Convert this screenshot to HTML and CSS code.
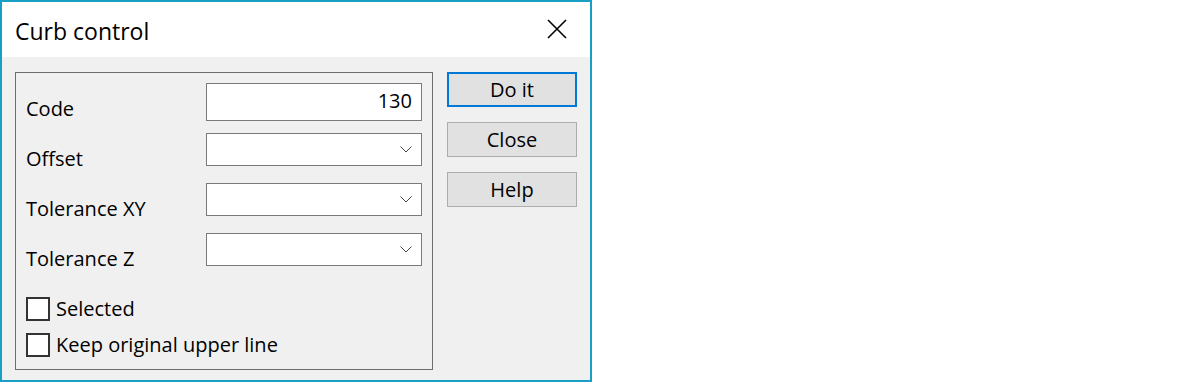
FILE: index.html
```html
<!DOCTYPE html>
<html lang="en">
<head>
    <meta charset="UTF-8">
    <meta name="viewport" content="width=device-width, initial-scale=1.0">
    <title>Curb control</title>
    <link rel="stylesheet" href="styles.css">
</head>
<body>
    <div class="window">
        <div class="titlebar">
            <span class="title">Curb control</span>
            <button class="close-x" title="Close">
                <svg width="20" height="20" viewBox="0 0 20 20">
                    <path d="M1 1 L19 19 M19 1 L1 19" stroke="#000" stroke-width="1.6" fill="none"/>
                </svg>
            </button>
        </div>

        <div class="content">
            <div class="group">
                <div class="row">
                    <label class="label">Code</label>
                    <div class="field edit">130</div>
                </div>
                <div class="row">
                    <label class="label">Offset</label>
                    <div class="field combo">
                        <svg width="12" height="7" viewBox="0 0 12 7">
                            <path d="M0.5 0.5 L6 6 L11.5 0.5" stroke="#444" stroke-width="1" fill="none"/>
                        </svg>
                    </div>
                </div>
                <div class="row">
                    <label class="label">Tolerance XY</label>
                    <div class="field combo">
                        <svg width="12" height="7" viewBox="0 0 12 7">
                            <path d="M0.5 0.5 L6 6 L11.5 0.5" stroke="#444" stroke-width="1" fill="none"/>
                        </svg>
                    </div>
                </div>
                <div class="row">
                    <label class="label">Tolerance Z</label>
                    <div class="field combo">
                        <svg width="12" height="7" viewBox="0 0 12 7">
                            <path d="M0.5 0.5 L6 6 L11.5 0.5" stroke="#444" stroke-width="1" fill="none"/>
                        </svg>
                    </div>
                </div>

                <div class="checks">
                    <div class="check"><span class="box"></span>Selected</div>
                    <div class="check"><span class="box"></span>Keep original upper line</div>
                </div>
            </div>

            <div class="buttons">
                <button class="btn default">Do it</button>
                <button class="btn">Close</button>
                <button class="btn">Help</button>
            </div>
        </div>
    </div>
</body>
</html>
```

FILE: styles.css
```css
body {
    margin: 0;
    background-color: #fff;
    font-family: 'Open Sans', 'Noto Sans', sans-serif;
    color: #000;
}

.window {
    width: 592px;
    height: 382px;
    box-sizing: border-box;
    border: 2px solid #1a9fc4;
    background-color: #f0f0f0;
}

.titlebar {
    height: 55px;
    background-color: #fff;
    display: flex;
    align-items: center;
    justify-content: space-between;
    padding-left: 13px;
}

.title {
    font-size: 23px;
    line-height: 26px;
    padding-top: 2px;
}

.close-x {
    background: none;
    border: none;
    padding: 0 0 2px 0;
    width: 60px;
    height: 55px;
    display: flex;
    align-items: center;
    justify-content: center;
    margin-right: 3px;
}

.content {
    display: flex;
    padding: 15px 0 0 13px;
}

.group {
    width: 418px;
    height: 298px;
    box-sizing: border-box;
    border: 1px solid #6d6d6d;
    padding: 10px 10px 0 10px;
}

.row {
    display: flex;
    height: 50px;
}

.label {
    width: 180px;
    font-size: 20px;
    line-height: 24px;
    padding-top: 14px;
}

.field {
    width: 216px;
    box-sizing: border-box;
    border: 1px solid #7a7a7a;
    background-color: #fff;
    height: 33px;
}

.edit {
    height: 38px;
    text-align: right;
    font-size: 20px;
    line-height: 24px;
    padding: 5px 9px 0 0;
}

.combo {
    display: flex;
    align-items: center;
    justify-content: flex-end;
    padding-right: 9px;
}

.checks {
    padding-top: 8px;
}

.check {
    display: flex;
    align-items: center;
    height: 36px;
    font-size: 20px;
    line-height: 24px;
}

.box {
    width: 24px;
    height: 24px;
    box-sizing: border-box;
    border: 2px solid #333;
    background-color: #fff;
    margin-right: 6px;
}

.buttons {
    display: flex;
    flex-direction: column;
    gap: 15px;
    margin-left: 14px;
}

.btn {
    width: 130px;
    height: 35px;
    box-sizing: border-box;
    border: 1px solid #adadad;
    background-color: #e1e1e1;
    font-family: 'Open Sans', 'Noto Sans', sans-serif;
    font-size: 20px;
    color: #000;
    padding: 0;
}

.btn.default {
    border: 2px solid #0078d7;
}
```
